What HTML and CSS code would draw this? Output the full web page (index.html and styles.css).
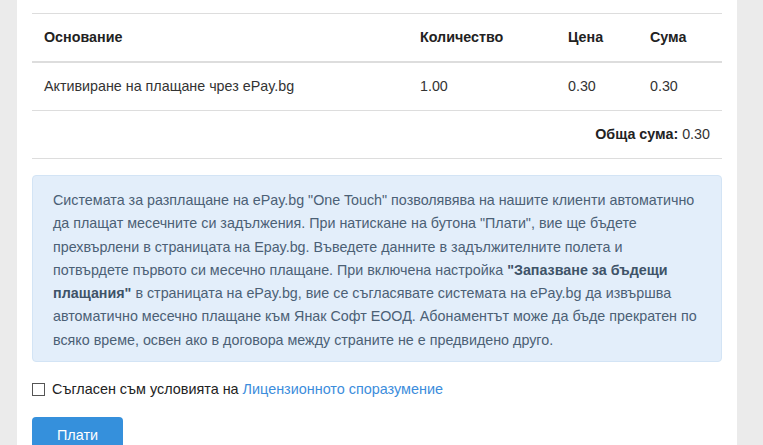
FILE: index.html
```html
<!DOCTYPE html>
<html lang="bg">
<head>
<meta charset="utf-8">
<link rel="stylesheet" href="styles.css">
</head>
<body>
<div class="panel">
  <table class="items">
    <thead>
      <tr>
        <th class="c-name">Основание</th>
        <th class="c-qty">Количество</th>
        <th class="c-price">Цена</th>
        <th class="c-sum">Сума</th>
      </tr>
    </thead>
    <tbody>
      <tr>
        <td>Активиране на плащане чрез ePay.bg</td>
        <td>1.00</td>
        <td>0.30</td>
        <td>0.30</td>
      </tr>
      <tr>
        <td colspan="4" class="total"><b>Обща сума:</b> 0.30</td>
      </tr>
    </tbody>
  </table>

  <div class="alert">
    Системата за разплащане на ePay.bg "One Touch" позволявява на нашите клиенти автоматично<br>
    да плащат месечните си задължения. При натискане на бутона "Плати", вие ще бъдете<br>
    прехвърлени в страницата на Epay.bg. Въведете данните в задължителните полета и<br>
    потвърдете първото си месечно плащане. При включена настройка <b>"Запазване за бъдещи<br>
    плащания"</b> в страницата на ePay.bg, вие се съгласявате системата на ePay.bg да извършва<br>
    автоматично месечно плащане към Янак Софт ЕООД. Абонаментът може да бъде прекратен по<br>
    всяко време, освен ако в договора между страните не е предвидено друго.
  </div>

  <label class="agree">
    <span class="box"></span>
    <span>Съгласен съм условията на <a href="#">Лицензионното споразумение</a></span>
  </label>

  <button class="pay">Плати</button>
</div>
</body>
</html>
```

FILE: styles.css
```css
html, body {
  margin: 0;
  padding: 0;
  background: #ebebeb;
  font-family: "Liberation Sans", Arial, sans-serif;
  font-size: 14px;
  color: #333;
}

.panel {
  margin-left: 17px;
  width: 690px;
  min-height: 445px;
  background: #fff;
  padding: 13px 15px 0;
}

.items {
  width: 690px;
  border-collapse: collapse;
  font-size: 14.3px;
}

.items th,
.items td {
  text-align: left;
  padding: 13px 12px 14px;
  line-height: 20px;
  border-top: 1px solid #dddddd;
}

.items th {
  font-weight: bold;
  color: #222;
  border-bottom: 2px solid #dddddd;
}

.items tbody tr:first-child td {
  border-top: 0;
}

.items tbody tr:last-child td {
  border-bottom: 1px solid #dddddd;
}

.c-name { width: 352px; }
.c-qty { width: 124px; }
.c-price { width: 58px; }

.items td.total {
  text-align: right;
  padding-right: 12px;
}

.items td.total b {
  color: #222;
}

.alert {
  margin-top: 16px;
  background: #e3eefa;
  border: 1px solid #d3e4f5;
  border-radius: 4px;
  padding: 13px 8px 9px 20px;
  color: #4b6075;
  font-size: 14.3px;
  line-height: 23.3px;
  white-space: nowrap;
}

.alert b {
  color: #3e5368;
}

.agree {
  display: flex;
  align-items: center;
  gap: 7px;
  margin-top: 17px;
  color: #222;
  font-size: 14.4px;
  line-height: 20px;
}

.box {
  width: 11px;
  height: 11px;
  border: 1px solid #555;
  background: #fff;
  display: inline-block;
  flex: none;
}

.agree a {
  color: #3c8ddc;
  text-decoration: none;
}

.pay {
  display: block;
  margin-top: 18px;
  width: 91px;
  height: 36px;
  border: 0;
  border-radius: 4px;
  background: #3590dc;
  color: #fff;
  font-family: "Liberation Sans", Arial, sans-serif;
  font-size: 14.4px;
  padding: 0;
}
```
